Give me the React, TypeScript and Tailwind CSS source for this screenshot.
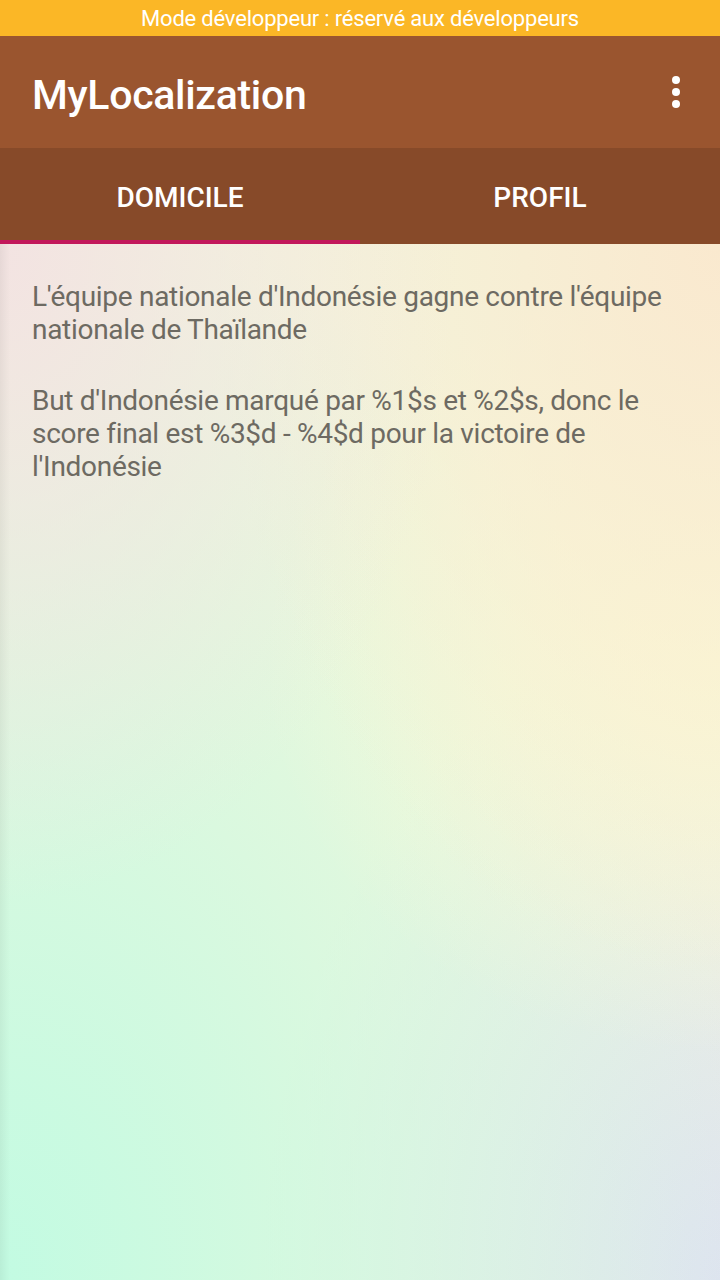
import React from "react";

export default function App() {
  return (
    <div
      className="w-[720px] h-[1280px] flex flex-col overflow-hidden"
      style={{ fontFamily: "Roboto, 'Noto Sans', sans-serif" }}
    >
      <div className="h-[36px] bg-[#fbb726] flex items-center justify-center pt-[2px] text-white text-[22px] leading-none tracking-[-0.2px]">
        Mode développeur : réservé aux développeurs
      </div>
      <div className="h-[112px] bg-[#9a552f] flex items-center justify-between pl-[32px] pr-[40px]">
        <div className="text-white text-[41px] font-medium leading-none tracking-[-0.3px] pt-[6px]">MyLocalization</div>
        <div className="flex flex-col gap-[4px]">
          <div className="w-[8px] h-[8px] rounded-full bg-white" />
          <div className="w-[8px] h-[8px] rounded-full bg-white" />
          <div className="w-[8px] h-[8px] rounded-full bg-white" />
        </div>
      </div>
      <div className="h-[96px] bg-[#874a29] flex">
        <div className="flex-1 flex flex-col">
          <div className="flex-1 flex items-center justify-center pt-[8px] text-white text-[28px] font-medium leading-none">DOMICILE</div>
          <div className="h-[4px] bg-[#c2185b]" />
        </div>
        <div className="flex-1 flex flex-col">
          <div className="flex-1 flex items-center justify-center pt-[8px] text-white text-[28px] font-medium leading-none">PROFIL</div>
          <div className="h-[4px]" />
        </div>
      </div>
      <div className="flex-1 bg-[#f2f6dc] bg-[linear-gradient(to_right,rgba(0,0,0,0.05),transparent_10px),radial-gradient(ellipse_at_0%_0%,#f3e3e2_0%,transparent_45%),radial-gradient(ellipse_at_100%_0%,#fae9cf_0%,transparent_50%),radial-gradient(ellipse_at_100%_40%,#fafad6_0%,transparent_45%),radial-gradient(ellipse_at_0%_100%,#c2fbe2_0%,transparent_75%),radial-gradient(ellipse_at_100%_100%,#dfe3f0_0%,transparent_45%)] px-[32px] pt-[36px] text-[#6d6a62] text-[28px] leading-[33px] tracking-[-0.3px]">
        <p>L'équipe nationale d'Indonésie gagne contre l'équipe nationale de Thaïlande</p>
        <p className="mt-[38px]">
          But d'Indonésie marqué par %1$s et %2$s, donc le score final est %3$d - %4$d pour la victoire de l'Indonésie
        </p>
      </div>
    </div>
  );
}
